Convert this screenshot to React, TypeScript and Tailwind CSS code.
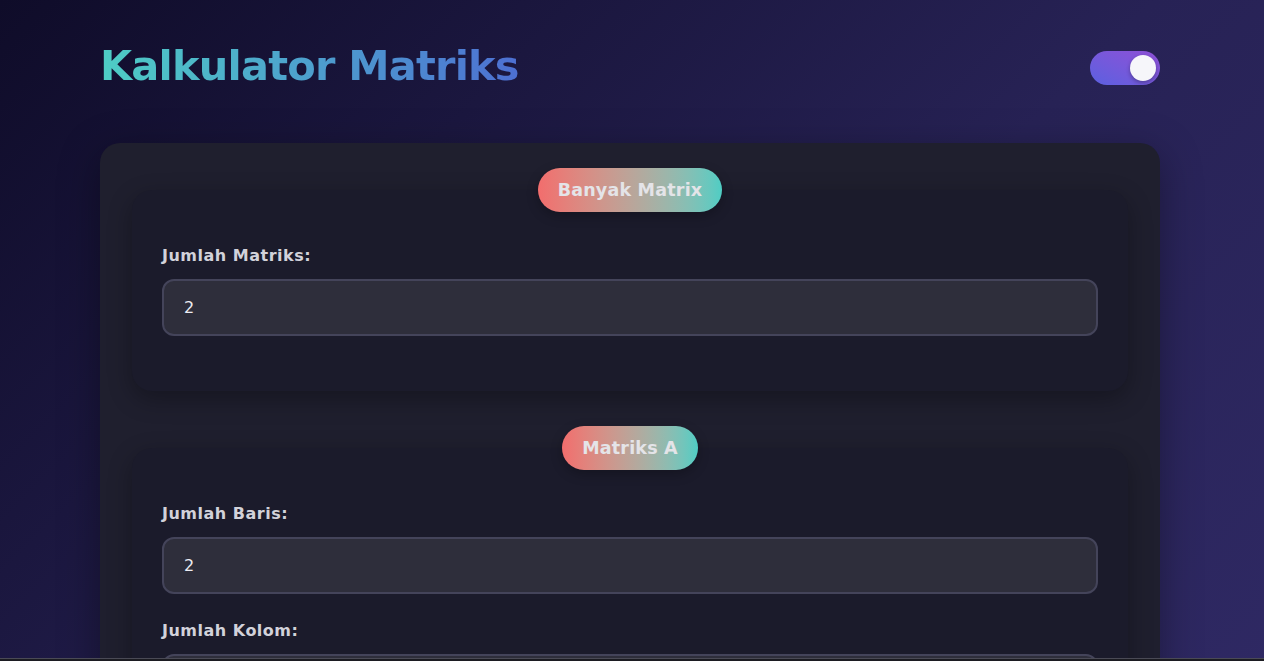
import { useState } from "react"

function SectionBadge({ title }: { title: string }) {
  return (
    <div className="relative z-10 h-[44px] px-5 rounded-full bg-gradient-to-r from-[#f26d6d] to-[#4ecdc4] flex items-center text-[17.5px] tracking-[0.2px] font-bold text-[#e4e4e8] shadow-[0_4px_12px_rgba(0,0,0,0.25)]">
      {title}
    </div>
  )
}

function Field({ label, value, last }: { label: string; value: string; last?: boolean }) {
  return (
    <div className={last ? "" : "mb-[25px]"}>
      <label className="block mb-[11px] text-[16px] tracking-[0.5px] leading-6 font-bold text-[#d2d2da]">{label}</label>
      <input
        defaultValue={value}
        className="w-full h-[57px] px-5 rounded-xl bg-[#2e2e3b] border-2 border-[#44445a] text-[16px] text-[#ececf2] outline-none"
      />
    </div>
  )
}

function Section({ title, children }: { title: string; children: React.ReactNode }) {
  return (
    <div className="flex flex-col items-center">
      <SectionBadge title={title} />
      <div className="-mt-[22px] w-full rounded-[20px] bg-[#1b1b2b] pt-[54px] px-[30px] pb-[30px] shadow-[0_8px_24px_rgba(0,0,0,0.3)]">
        {children}
      </div>
    </div>
  )
}

export default function App() {
  const [dark, setDark] = useState(true)

  return (
    <div
      className="min-h-screen bg-[linear-gradient(135deg,#0f0c29_0%,#272255_55%,#302a66_100%)] pl-[100px] pr-[104px] pt-[40px] pb-10"
      style={{ fontFamily: "'DejaVu Sans', 'Open Sans', sans-serif" }}
    >
      <header className="flex items-center justify-between h-[56px]">
        <h1 className="-mt-[4px] text-[41.5px] font-bold tracking-[-0.8px] bg-gradient-to-r from-[#4ecdc4] to-[#4d6fd2] bg-clip-text text-transparent">
          Kalkulator Matriks
        </h1>
        <button
          onClick={() => setDark(!dark)}
          className="w-[70px] h-[34px] rounded-full bg-gradient-to-tr from-[#5a60e0] to-[#8e4fd6] flex items-center justify-end px-1"
        >
          <span className="w-[26px] h-[26px] rounded-full bg-[#f6f6fa] shadow-[0_2px_4px_rgba(0,0,0,0.3)]" />
        </button>
      </header>

      <main className="mt-[47px] rounded-[20px] bg-[#1f1f2e] px-8 pt-[25px] pb-8 flex flex-col gap-[35px] shadow-[0_10px_40px_rgba(0,0,0,0.35)]">
        <Section title="Banyak Matrix">
          <Field label="Jumlah Matriks:" value="2" />
        </Section>
        <Section title="Matriks A">
          <Field label="Jumlah Baris:" value="2" />
          <Field label="Jumlah Kolom:" value="2" />
        </Section>
      </main>

      <div className="fixed inset-x-0 bottom-0 h-[3px] border-t border-[#4a4a55] bg-[#1c1c22]" />
    </div>
  )
}
